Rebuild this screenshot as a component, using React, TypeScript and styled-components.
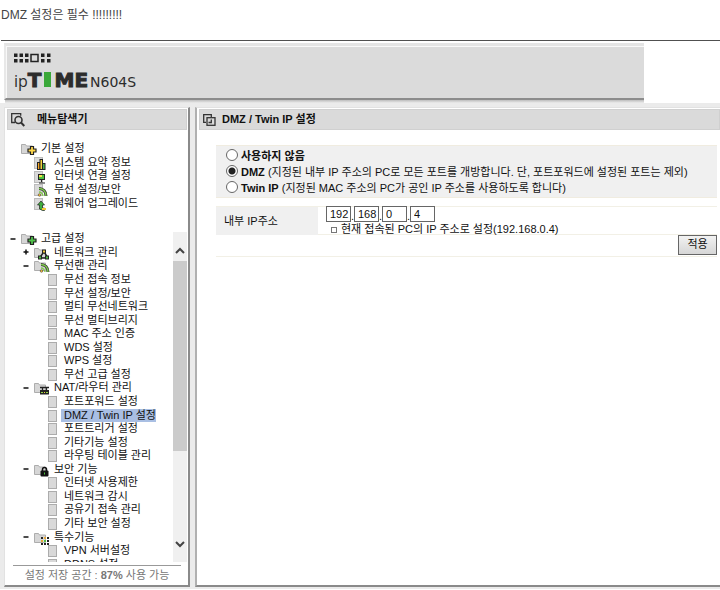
import React from "react";
import styled, { createGlobalStyle, css } from "styled-components";

const GlobalStyle = createGlobalStyle`
  * { box-sizing: border-box; }
  html, body { margin: 0; background: #fff; overflow: hidden; }
  body, button, input {
    font-family: "Liberation Sans", "Noto Sans CJK KR", sans-serif;
    font-size: 11px;
    line-height: 14px;
    color: #111;
  }
  ul { list-style: none; margin: 0; padding: 0; }
  h1, h2, p { margin: 0; font-weight: 400; }
`;

const Page = styled.div`
  display: flex;
  flex-direction: column;
  min-height: 100vh;
`;

const Notice = styled.p`
  padding: 6px 1px 0;
  height: 40px;
  font-size: 12px;
  line-height: 18px;
  color: #444;
`;

const Rule = styled.hr`
  width: 100%;
  margin: 0 0 2px 1px;
  border: 0;
  border-top: 1px solid #505050;
`;

const Banner = styled.header`
  margin: 0 76px 0 4px;
  padding: 7px 8px 0;
  height: 57px;
  border-top: 3px solid #e4e4e4;
  border-left: 2px solid #e8e8e8;
  border-bottom: 2px solid #8c8c8c;
  background: #dbdbdb;
  box-shadow: inset 1px 1px 0 #f8f8f8;
`;

const BannerShade = styled.div`
  height: 3px;
  margin: 0 76px 0 5px;
  background: linear-gradient(#bdbdbd, #ececec);
`;

const Dots = styled.svg`
  display: block;
`;

const Logo = styled.h1`
  display: flex;
  align-items: baseline;
  margin-top: 6px;
  line-height: 22px;
  color: #2c2c2c;
`;

const LogoIp = styled.span`
  font-family: "Open Sans", sans-serif;
  font-size: 16px;
`;

const LogoTime = styled.span`
  font-family: "DejaVu Sans", sans-serif;
  font-size: 20px;
  font-weight: 700;
  -webkit-text-stroke: 1px #2c2c2c;
`;

const LogoBar = styled.span`
  display: inline-block;
  margin: 0 3px;
  width: 7px;
  height: 15px;
  overflow: hidden;
  vertical-align: baseline;
  background: #3aa83a;
  color: #3aa83a;
  font-size: 16px;
  line-height: 15px;
  text-align: center;
  -webkit-text-stroke: 0;
`;

const LogoModel = styled.span`
  margin-left: 2px;
  font-family: "DejaVu Sans", sans-serif;
  font-size: 14px;
`;

const Columns = styled.div`
  display: grid;
  grid-template-columns: 186px 1fr;
  column-gap: 5px;
  padding: 4px 0 2px 4px;
  background: #ebebeb;
`;

const Panel = styled.section`
  display: flex;
  flex-direction: column;
  min-width: 0;
  background: #fff;
  border: solid #e2e2e2;
  border-width: 1px 0 2px 1px;
  border-bottom-color: #8a8a8a;
  padding: 1px 2px 0;
`;

const SidePanel = styled(Panel)`
  border-right: 2px solid #8a8a8a;
  padding-right: 1px;
  height: 480px;
`;

const MainPanel = styled(Panel)`
  border-left: 2px solid #b0b0b0;
  padding-right: 0;
`;

const PanelTitle = styled.h2<{ $gap: number }>`
  display: flex;
  align-items: center;
  flex: none;
  gap: ${(p) => p.$gap}px;
  height: 21px;
  padding: 0 4px 1px 3px;
  background: #dadada;
  border: 1px solid #d0d0d0;
  font-size: 11px;
  font-weight: 700;
  svg { margin-top: 2px; }
`;

const TreeArea = styled.div`
  display: flex;
  flex-direction: column;
  flex: 1;
  min-height: 0;
  padding-top: 12px;
`;

const Tree = styled.ul<{ $height: number }>`
  display: grid;
  grid-auto-rows: 1fr;
  flex: 1 0 auto;
  height: ${(p) => p.$height}px;
`;

const BasicGroup = styled.nav`
  margin-bottom: 22px;
`;

const ScrollBox = styled.nav`
  display: flex;
  align-items: flex-start;
  flex: 1;
  min-height: 0;
  overflow: hidden;
`;

const indents = [3, 16, 30];

const Row = styled.li<{ $level: number }>`
  display: flex;
  align-items: center;
  min-height: 0;
  padding-left: ${(p) => indents[p.$level]}px;
`;

const Toggle = styled.button`
  flex: none;
  width: 11px;
  height: 10px;
  padding: 0;
  border: 0;
  background: none;
  display: flex;
  align-items: center;
`;

const ToggleSpace = styled.span`
  flex: none;
  width: 11px;
`;

const IconSlot = styled.span<{ $leaf: boolean }>`
  flex: none;
  display: flex;
  width: ${(p) => (p.$leaf ? 16 : 20)}px;
  height: 15px;
  padding-top: 2px;
  svg { flex: none; overflow: visible; }
`;

const NodeLink = styled.a<{ $active: boolean }>`
  color: #111;
  text-decoration: none;
  white-space: nowrap;
  line-height: 13px;
  ${(p) => p.$active && css`
    background: #a9bfe3;
    box-shadow: -3px 0 0 #a9bfe3;
  `}
`;

const ScrollBar = styled.div`
  display: flex;
  flex-direction: column;
  flex: none;
  align-self: stretch;
  width: 14px;
  background: #f0f0f0;
`;

const ScrollButton = styled.button<{ $end?: boolean }>`
  display: flex;
  justify-content: center;
  align-items: center;
  height: 29px;
  padding: ${(p) => (p.$end ? "0 0 6px" : "8px 0 0")};
  border: 0;
  background: none;
`;

const Thumb = styled.div`
  flex: none;
  height: 190px;
  margin-bottom: auto;
  background: #cbcbcb;
`;

const Storage = styled.p`
  flex: none;
  margin: 3px 6px 0;
  padding-top: 2px;
  height: 20px;
  border-top: 1px solid #999;
  text-align: center;
  color: #777;
`;

const Form = styled.form`
  width: 501px;
  max-width: 100%;
  margin: 15px 0 0 17px;
`;

const ModeGroup = styled.div`
  padding: 2px 8px 1px 10px;
  background: #f0f0f0;
  border: solid #f0ece0;
  border-width: 1px 0;
`;

const ModeOption = styled.label`
  display: flex;
  align-items: center;
  gap: 3px;
  height: 16px;
  white-space: nowrap;
`;

const Radio = styled.input`
  appearance: none;
  flex: none;
  width: 12px;
  height: 12px;
  margin: 0 0 2px;
  border: 1px solid #666;
  border-radius: 50%;
  background: #fff;
  &:checked { background: radial-gradient(circle, #222 3px, #fff 4px); }
`;

const AddressRow = styled.div`
  display: grid;
  grid-template-columns: 102px 1fr;
  height: 29px;
  margin-top: 8px;
  border: solid #f2f0e6;
  border-width: 1px 0;
`;

const AddressLabel = styled.div`
  display: flex;
  align-items: center;
  padding-left: 8px;
  background: #f0f0f0;
`;

const AddressFields = styled.div`
  padding-left: 8px;
`;

const Octets = styled.div`
  display: flex;
  align-items: flex-end;
  height: 15px;
`;

const Dot = styled.span`
  width: 3px;
  line-height: 11px;
`;

const OctetInput = styled.input`
  width: 25px;
  height: 16px;
  padding: 0 0 1px 3px;
  border: 1px solid #666;
  background: #fff;
`;

const UseCurrent = styled.label`
  display: flex;
  align-items: center;
  gap: 4px;
  height: 13px;
  padding-left: 5px;
  white-space: nowrap;
`;

const SmallCheck = styled.input`
  appearance: none;
  width: 6px;
  height: 6px;
  margin: 2px 0 0;
  border: 1px solid #777;
  background: #fff;
  &:checked { background: #333; }
`;

const Actions = styled.div`
  display: flex;
  justify-content: flex-end;
  height: 22px;
  border-bottom: 1px solid #f2f0e6;
`;

const ApplyButton = styled.button`
  width: 39px;
  height: 20px;
  padding: 0 0 3px;
  border: 1px solid #666;
  background: linear-gradient(#f2f2f2, #d6d6d6);
`;

type IconKind =
  | "basic" | "chart" | "net" | "wifi" | "upgrade"
  | "advanced" | "nodes" | "router" | "lock" | "special" | "page";

const Badge = ({ kind }: { kind: IconKind }) => {
  switch (kind) {
    case "basic":
    case "advanced":
      return (
        <path
          d="M9.500 3.500h3v2.500h2.500v3h-2.500v2.500h-3V9H7V6h2.500z"
          fill={kind === "basic" ? "#ffd84a" : "#4fc24a"}
          stroke="#222"
          strokeWidth="1.200"
        />
      );
    case "chart":
      return (
        <g stroke="#222">
          <rect x="3.500" y="5.500" width="2.500" height="7" fill="#f6a723" />
          <rect x="6" y="2.500" width="2.500" height="10" fill="#f6d33c" />
          <rect x="8.500" y="6.500" width="2.500" height="6" fill="#49b24a" />
        </g>
      );
    case "net":
      return (
        <g>
          <rect x="4.500" y="3.500" width="6" height="5" fill="#4fbf3f" stroke="#222" />
          <rect x="5" y="4" width="3" height="2" fill="#f3df48" />
          <path d="M7.500 9v2M5 12h6" stroke="#222" />
        </g>
      );
    case "wifi":
      return (
        <g fill="none">
          <path d="M5 4.500c4 0 7 3 7 7.500" stroke="#333" strokeWidth="3" />
          <path d="M5 4.500c4 0 7 3 7 7.500M5 8c2 0 4 2 4 4" stroke="#7fca4d" strokeWidth="1.300" />
          <circle cx="5.500" cy="11" r="1.300" fill="#f3b93b" stroke="#333" strokeWidth=".5" />
        </g>
      );
    case "upgrade":
      return (
        <g>
          <path d="M7 3L3.500 7h2v4l3 1.500h2V10H8.500V7h2z" fill="#3fae3f" stroke="#222" strokeWidth=".7" />
          <rect x="8" y="10" width="4" height="2" fill="#f3c93b" />
        </g>
      );
    case "nodes":
      return (
        <g>
          <path d="M10 4.500L6 10.500M10 4.500l3.500 6M6 11h7" stroke="#222" strokeWidth="1.500" />
          <rect x="8.500" y="3" width="3" height="3" fill="#f3c93b" stroke="#222" />
          <rect x="4.500" y="9" width="3" height="3" fill="#4fbf3f" stroke="#222" />
          <rect x="11.500" y="9" width="3" height="3" fill="#4fbf3f" stroke="#222" />
        </g>
      );
    case "router":
      return (
        <g>
          <path d="M6 5.500h9M8.500 5v4M12.500 5v4" stroke="#222" strokeWidth="1.300" />
          <rect x="6" y="8" width="9" height="4.500" fill="#222" />
          <path d="M7 10.500h2M12 10.500h2" stroke="#8fd13f" />
          <path d="M10 10.500h1" stroke="#f3c93b" />
        </g>
      );
    case "lock":
      return (
        <g>
          <path d="M8.500 8V5.500a2 2 0 0 1 4 0V8" fill="none" stroke="#111" strokeWidth="1.500" />
          <rect x="6.500" y="6.500" width="8" height="6" rx="1" fill="#111" />
          <path d="M10.500 8.500v2" stroke="#4fbf3f" />
        </g>
      );
    case "special":
      return (
        <g>
          <path d="M7 6h8M7 9h8M7 12h8" stroke="#222" strokeWidth="2" strokeDasharray="2 1" />
          <path d="M7 9h2M10 6h2" stroke="#e5a93a" strokeWidth="2" />
          <path d="M10 9h2" stroke="#4fbf3f" strokeWidth="2" />
        </g>
      );
    default:
      return null;
  }
};

const isPage = (k: IconKind) => ["page", "chart", "net", "wifi", "upgrade"].includes(k);

const NodeIcon = ({ kind, folder }: { kind: IconKind; folder?: boolean }) => (
  <svg width="16" height="14" viewBox="0 0 16 14" aria-hidden="true">
    {isPage(kind) && !folder ? (
      <rect
        x=".500"
        y=".500"
        width="8"
        height="11"
        fill="#d9d9d9"
        stroke={kind === "page" ? "#acacac" : "#bbb"}
      />
    ) : (
      <path d="M.5 1.500h4l1 1.500h6v7.500H.5z" fill="#d6d6d6" stroke="#adadad" />
    )}
    {folder && kind === "wifi" ? (
      <g transform="translate(2 0)"><Badge kind={kind} /></g>
    ) : (
      <Badge kind={kind} />
    )}
  </svg>
);

type Node = {
  text: string;
  level: number;
  icon: IconKind;
  toggle?: "+" | "-";
  active?: boolean;
};

const basicNodes: Node[] = [
  { text: "기본 설정", level: 0, icon: "basic" },
  { text: "시스템 요약 정보", level: 1, icon: "chart" },
  { text: "인터넷 연결 설정", level: 1, icon: "net" },
  { text: "무선 설정/보안", level: 1, icon: "wifi" },
  { text: "펌웨어 업그레이드", level: 1, icon: "upgrade" },
];

const page = (text: string, active = false): Node => ({ text, level: 2, icon: "page", active });

const advancedNodes: Node[] = [
  { text: "고급 설정", level: 0, icon: "advanced", toggle: "-" },
  { text: "네트워크 관리", level: 1, icon: "nodes", toggle: "+" },
  { text: "무선랜 관리", level: 1, icon: "wifi", toggle: "-" },
  page("무선 접속 정보"),
  page("무선 설정/보안"),
  page("멀티 무선네트워크"),
  page("무선 멀티브리지"),
  page("MAC 주소 인증"),
  page("WDS 설정"),
  page("WPS 설정"),
  page("무선 고급 설정"),
  { text: "NAT/라우터 관리", level: 1, icon: "router", toggle: "-" },
  page("포트포워드 설정"),
  page("DMZ / Twin IP 설정", true),
  page("포트트리거 설정"),
  page("기타기능 설정"),
  page("라우팅 테이블 관리"),
  { text: "보안 기능", level: 1, icon: "lock", toggle: "-" },
  page("인터넷 사용제한"),
  page("네트워크 감시"),
  page("공유기 접속 관리"),
  page("기타 보안 설정"),
  { text: "특수기능", level: 1, icon: "special", toggle: "-" },
  page("VPN 서버설정"),
  page("DDNS 설정"),
];

const TreeRow = ({ node }: { node: Node }) => (
  <Row $level={node.level}>
    {node.toggle ? (
      <Toggle type="button" aria-label={`${node.text} ${node.toggle === "+" ? "펼치기" : "접기"}`}>
        <svg width="6" height="6" viewBox="0 0 6 6" aria-hidden="true">
          <path d={node.toggle === "+" ? "M.5 3h5M3 .5v5" : "M.5 3h5"} stroke="#111" strokeWidth="1.500" />
        </svg>
      </Toggle>
    ) : (
      <ToggleSpace />
    )}
    <IconSlot $leaf={node.icon === "page"}>
      <NodeIcon kind={node.icon} folder={!!node.toggle} />
    </IconSlot>
    <NodeLink href="#" $active={!!node.active}>{node.text}</NodeLink>
  </Row>
);

const modes = [
  { id: "off", name: "사용하지 않음", note: "" },
  { id: "dmz", name: "DMZ", note: "(지정된 내부 IP 주소의 PC로 모든 포트를 개방합니다. 단, 포트포워드에 설정된 포트는 제외)" },
  { id: "twin", name: "Twin IP", note: "(지정된 MAC 주소의 PC가 공인 IP 주소를 사용하도록 합니다)" },
];

const octets = ["192", "168", "0", "4"];

export default function App() {
  return (
    <Page>
      <GlobalStyle />
      <Notice>DMZ 설정은 필수 !!!!!!!!!</Notice>
      <Rule />
      <Banner>
        <Dots width="38" height="10" viewBox="0 0 38 10" aria-hidden="true">
          <g fill="#222">
            {[0, 5.5, 11, 27, 33].map((x) =>
              [0, 5.5].map((y) => <rect key={`${x}-${y}`} x={x} y={y + 0.5} width="3.500" height="3.500" />)
            )}
          </g>
          <rect x="17" y="1.500" width="7" height="7" fill="none" stroke="#222" strokeWidth="1.500" />
        </Dots>
        <Logo>
          <LogoIp>ip</LogoIp>
          <LogoTime>T<LogoBar>I</LogoBar>ME</LogoTime>
          <LogoModel>N604S</LogoModel>
        </Logo>
      </Banner>
      <BannerShade />
      <Columns>
        <SidePanel>
          <PanelTitle $gap={12}>
            <svg width="14" height="14" viewBox="0 0 14 14" fill="none" stroke="#333" aria-hidden="true">
              <path d="M4 9.500H.7V.7h9v2" strokeWidth="1.300" />
              <circle cx="7.500" cy="7" r="3.500" strokeWidth="1.600" />
              <path d="M10 9.500l3.300 3.500" strokeWidth="2" />
            </svg>
            메뉴탐색기
          </PanelTitle>
          <TreeArea>
            <BasicGroup>
              <Tree $height={68}>
                {basicNodes.map((n) => <TreeRow key={n.text} node={n} />)}
              </Tree>
            </BasicGroup>
            <ScrollBox>
              <Tree $height={339}>
                {advancedNodes.map((n) => <TreeRow key={n.text} node={n} />)}
              </Tree>
              <ScrollBar>
                <ScrollButton type="button" aria-label="위로">
                  <svg width="10" height="7" viewBox="0 0 10 7" fill="none" aria-hidden="true">
                    <path d="M1 6l4-4 4 4" stroke="#444" strokeWidth="2" />
                  </svg>
                </ScrollButton>
                <Thumb />
                <ScrollButton type="button" aria-label="아래로" $end>
                  <svg width="10" height="7" viewBox="0 0 10 7" fill="none" aria-hidden="true">
                    <path d="M1 1l4 4 4-4" stroke="#444" strokeWidth="2" />
                  </svg>
                </ScrollButton>
              </ScrollBar>
            </ScrollBox>
          </TreeArea>
          <Storage>설정 저장 공간 : <b>87%</b> 사용 가능</Storage>
        </SidePanel>
        <MainPanel>
          <PanelTitle $gap={6}>
            <svg width="13" height="12" viewBox="0 0 13 12" fill="none" stroke="#333" strokeWidth="1.300" aria-hidden="true">
              <path d="M3 8.300H.7V.7h7.600V3" />
              <rect x="4" y="3.700" width="8" height="7.600" />
              <path d="M8.300 5.500v3H5.500" />
            </svg>
            DMZ / Twin IP 설정
          </PanelTitle>
          <Form onSubmit={(e) => e.preventDefault()}>
            <ModeGroup role="radiogroup" aria-label="DMZ / Twin IP 설정">
              {modes.map((m) => (
                <ModeOption key={m.id}>
                  <Radio type="radio" name="mode" value={m.id} defaultChecked={m.id === "dmz"} />
                  <span><b>{m.name}</b> {m.note}</span>
                </ModeOption>
              ))}
            </ModeGroup>
            <AddressRow>
              <AddressLabel id="ip-label">내부 IP주소</AddressLabel>
              <AddressFields>
                <Octets role="group" aria-labelledby="ip-label">
                  {octets.map((o, i) => (
                    <React.Fragment key={i}>
                      {i > 0 && <Dot>.</Dot>}
                      <OctetInput type="text" defaultValue={o} aria-label={`내부 IP주소 ${i + 1}`} />
                    </React.Fragment>
                  ))}
                </Octets>
                <UseCurrent>
                  <SmallCheck type="checkbox" />
                  현재 접속된 PC의 IP 주소로 설정(192.168.0.4)
                </UseCurrent>
              </AddressFields>
            </AddressRow>
            <Actions>
              <ApplyButton type="submit">적용</ApplyButton>
            </Actions>
          </Form>
        </MainPanel>
      </Columns>
    </Page>
  );
}
